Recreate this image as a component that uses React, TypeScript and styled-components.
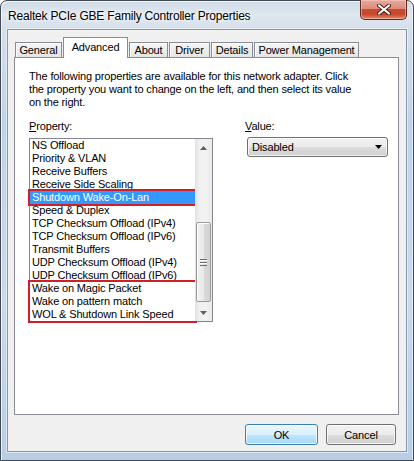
import React from "react";
import styled, { createGlobalStyle } from "styled-components";

const GlobalStyle = createGlobalStyle`
  html, body {
    margin: 0;
    padding: 0;
    background: #ffffff;
  }
  body {
    font-family: "Liberation Sans", Arial, sans-serif;
    font-size: 11px;
    letter-spacing: -0.15px;
    color: #000;
  }
`;

const tabs = [
  { label: "General", w: 47 },
  { label: "Advanced", w: 65, active: true },
  { label: "About", w: 39 },
  { label: "Driver", w: 41 },
  { label: "Details", w: 42 },
  { label: "Power Management", w: 105 },
];

const properties = [
  "NS Offload",
  "Priority & VLAN",
  "Receive Buffers",
  "Receive Side Scaling",
  "Shutdown Wake-On-Lan",
  "Speed & Duplex",
  "TCP Checksum Offload (IPv4)",
  "TCP Checksum Offload (IPv6)",
  "Transmit Buffers",
  "UDP Checksum Offload (IPv4)",
  "UDP Checksum Offload (IPv6)",
];

const wakeItems = [
  "Wake on Magic Packet",
  "Wake on pattern match",
  "WOL & Shutdown Link Speed",
];

export default function App() {
  return (
    <>
      <GlobalStyle />
      <Window>
        <TitleBar>
          <Title>Realtek PCIe GBE Family Controller Properties</Title>
          <CloseButton>
            <svg width="14" height="11" viewBox="0 0 14 11">
              <path d="M2 1.5 L12 9.5 M12 1.5 L2 9.5" stroke="#4a1a12" strokeWidth="4" strokeLinecap="round" />
              <path d="M2 1.5 L12 9.5 M12 1.5 L2 9.5" stroke="#ffffff" strokeWidth="2.2" strokeLinecap="round" />
            </svg>
          </CloseButton>
        </TitleBar>
        <Client>
          <TabRow>
            {tabs.map((t) => (
              <Tab key={t.label} $w={t.w} $active={!!t.active}>
                {t.label}
              </Tab>
            ))}
          </TabRow>
          <Panel>
            <Description>
              The following properties are available for this network adapter. Click
              <br />
              the property you want to change on the left, and then select its value
              <br />
              on the right.
            </Description>
            <Columns>
              <LeftColumn>
                <FieldLabel>
                  <u>P</u>roperty:
                </FieldLabel>
                <ListBox>
                  <Items>
                    {properties.map((p) => (
                      <Item key={p} $selected={p === "Shutdown Wake-On-Lan"}>
                        {p}
                      </Item>
                    ))}
                    <MarkedGroup>
                      {wakeItems.map((p) => (
                        <Item key={p}>{p}</Item>
                      ))}
                    </MarkedGroup>
                  </Items>
                  <ScrollBar>
                    <ArrowButton>
                      <svg width="7" height="4" viewBox="0 0 7 4">
                        <polygon points="3.5,0 7,4 0,4" fill="#5f5f5f" />
                      </svg>
                    </ArrowButton>
                    <Track>
                      <Thumb>
                        <svg width="7" height="7" viewBox="0 0 7 7">
                          <rect x="0" y="0" width="7" height="1" fill="#6b6b6b" />
                          <rect x="0" y="1" width="7" height="1" fill="#ffffff" />
                          <rect x="0" y="3" width="7" height="1" fill="#6b6b6b" />
                          <rect x="0" y="4" width="7" height="1" fill="#ffffff" />
                          <rect x="0" y="6" width="7" height="1" fill="#6b6b6b" />
                        </svg>
                      </Thumb>
                    </Track>
                    <ArrowButton>
                      <svg width="7" height="4" viewBox="0 0 7 4">
                        <polygon points="0,0 7,0 3.5,4" fill="#5f5f5f" />
                      </svg>
                    </ArrowButton>
                  </ScrollBar>
                </ListBox>
              </LeftColumn>
              <RightColumn>
                <FieldLabel>
                  <u>V</u>alue:
                </FieldLabel>
                <Dropdown>
                  <span>Disabled</span>
                  <svg width="7" height="4" viewBox="0 0 7 4">
                    <polygon points="0,0 7,0 3.5,4" fill="#000" />
                  </svg>
                </Dropdown>
              </RightColumn>
            </Columns>
          </Panel>
          <ButtonRow>
            <PushButton $default>OK</PushButton>
            <PushButton>Cancel</PushButton>
          </ButtonRow>
        </Client>
      </Window>
    </>
  );
}

const Window = styled.div`
  box-sizing: border-box;
  width: 414px;
  height: 461px;
  border: 1px solid #3f4a55;
  border-radius: 7px 7px 0 0;
  padding: 0 6px 8px 6px;
  display: flex;
  flex-direction: column;
  background: linear-gradient(
    to bottom,
    #cfdbe8 0px,
    #dfe7ef 14px,
    #d3deea 30px,
    #bfd3e8 120px,
    #c8daec 300px,
    #b8cde4 461px
  );
  box-shadow: inset 1px 1px 0 rgba(255, 255, 255, 0.7),
    inset -1px 0 0 rgba(255, 255, 255, 0.5);
`;

const TitleBar = styled.div`
  height: 28px;
  display: flex;
  align-items: flex-start;
`;

const Title = styled.div`
  margin: 8px 0 0 1px;
  font-family: "Liberation Sans", Arial, sans-serif;
  font-size: 12px;
  letter-spacing: -0.2px;
  line-height: 14px;
  color: #000;
  text-shadow: 0 0 6px #ffffff, 0 0 3px #ffffff;
`;

const CloseButton = styled.div`
  box-sizing: border-box;
  margin-left: auto;
  margin-top: -1px;
  width: 47px;
  height: 20px;
  display: flex;
  align-items: center;
  justify-content: center;
  border: 1px solid #5e2a20;
  border-top: none;
  border-radius: 0 0 5px 5px;
  background: linear-gradient(
    to bottom,
    #e9a99b 0%,
    #dc8c7b 45%,
    #c94a30 50%,
    #c8482c 75%,
    #e3896b 100%
  );
  box-shadow: inset 0 0 0 1px rgba(255, 220, 210, 0.45);
`;

const Client = styled.div`
  flex: 1;
  display: flex;
  flex-direction: column;
  background: #f0f0f0;
  border: 1px solid #8496aa;
  box-shadow: 0 0 0 1px rgba(255, 255, 255, 0.55);
  padding: 7px 7px 6px 6px;
`;

const TabRow = styled.div`
  display: flex;
  align-items: flex-end;
  gap: 1px;
  padding-left: 1px;
  height: 20px;
  position: relative;
  z-index: 1;
`;

const Tab = styled.div<{ $w: number; $active?: boolean }>`
  box-sizing: border-box;
  width: ${(p) => p.$w}px;
  height: ${(p) => (p.$active ? 21 : 15)}px;
  margin-bottom: ${(p) => (p.$active ? -1 : 0)}px;
  display: flex;
  align-items: center;
  justify-content: center;
  padding-bottom: ${(p) => (p.$active ? 2 : 0)}px;
  border: 1px solid #898c95;
  border-bottom: none;
  background: ${(p) =>
    p.$active ? "#ffffff" : "linear-gradient(to bottom, #f5f5f5, #e5e5e5)"};
  box-shadow: ${(p) => (p.$active ? "none" : "inset 1px 1px 0 #ffffff")};
  font-size: 11px;
  white-space: nowrap;
`;

const Panel = styled.div`
  box-sizing: border-box;
  height: 358px;
  border: 1px solid #898c95;
  background: #ffffff;
  padding: 12px 10px 0 14px;
`;

const Description = styled.div`
  font-size: 11px;
  line-height: 13px;
  white-space: nowrap;
`;

const Columns = styled.div`
  display: flex;
  gap: 32px;
  margin-top: 11px;
`;

const LeftColumn = styled.div`
  display: flex;
  flex-direction: column;
  width: 184px;
`;

const RightColumn = styled.div`
  display: flex;
  flex-direction: column;
`;

const FieldLabel = styled.div`
  font-size: 11px;
  line-height: 13px;
  margin-bottom: 5px;

  u {
    text-decoration: underline;
    text-underline-offset: 1px;
  }
`;

const ListBox = styled.div`
  box-sizing: border-box;
  width: 184px;
  height: 184px;
  border: 1px solid #828790;
  display: flex;
  background: #ffffff;
`;

const Items = styled.div`
  flex: 1;
  display: flex;
  flex-direction: column;
`;

const Item = styled.div<{ $selected?: boolean }>`
  height: 13px;
  line-height: 13px;
  padding-left: 2px;
  font-size: 11px;
  white-space: nowrap;
  background: ${(p) => (p.$selected ? "#3399ff" : "transparent")};
  color: ${(p) => (p.$selected ? "#ffffff" : "#000000")};
  outline: ${(p) => (p.$selected ? "2px solid #d11f2a" : "none")};
`;

const MarkedGroup = styled.div`
  display: flex;
  flex-direction: column;
  outline: 2px solid #d11f2a;
`;

const ScrollBar = styled.div`
  width: 17px;
  display: flex;
  flex-direction: column;
  background: linear-gradient(to right, #e2e2e2, #efefef 25%, #f2f2f2 60%, #ebebeb);
`;

const ArrowButton = styled.div`
  height: 17px;
  display: flex;
  align-items: center;
  justify-content: center;
`;

const Track = styled.div`
  flex: 1;
  display: flex;
  flex-direction: column;
  align-items: center;
`;

const Thumb = styled.div`
  box-sizing: border-box;
  margin-top: 66px;
  width: 15px;
  height: 80px;
  border: 1px solid #9a9a9a;
  border-radius: 2px;
  display: flex;
  align-items: center;
  justify-content: center;
  background: linear-gradient(
    to right,
    #f3f3f3 0%,
    #e9e9e9 50%,
    #dbdbdb 51%,
    #d2d2d2 100%
  );
  box-shadow: inset 1px 1px 0 #ffffff;
`;

const Dropdown = styled.div`
  box-sizing: border-box;
  margin-left: 2px;
  margin-top: -1px;
  width: 141px;
  height: 20px;
  display: flex;
  align-items: center;
  justify-content: space-between;
  padding: 0 5px 0 4px;
  border: 1px solid #707070;
  border-radius: 3px;
  font-size: 11px;
  background: linear-gradient(
    to bottom,
    #f2f2f2 0%,
    #ebebeb 50%,
    #dddddd 51%,
    #cfcfcf 100%
  );
  box-shadow: inset 0 0 0 1px rgba(255, 255, 255, 0.8);
`;

const ButtonRow = styled.div`
  display: flex;
  justify-content: flex-end;
  gap: 8px;
  margin-top: 9px;
  padding-right: 3px;
`;

const PushButton = styled.div<{ $default?: boolean }>`
  box-sizing: border-box;
  width: ${(p) => (p.$default ? 73 : 70)}px;
  height: 21px;
  display: flex;
  align-items: center;
  justify-content: center;
  font-size: 11px;
  border: 1px solid ${(p) => (p.$default ? "#3c7fb1" : "#707070")};
  border-radius: 3px;
  background: ${(p) =>
    p.$default
      ? "linear-gradient(to bottom, #eaf6fd 0%, #d9f0fc 50%, #bee6fd 51%, #a7d9f5 100%)"
      : "linear-gradient(to bottom, #f2f2f2 0%, #ebebeb 50%, #dddddd 51%, #cfcfcf 100%)"};
  box-shadow: inset 0 0 0 1px rgba(255, 255, 255, 0.75);
`;
